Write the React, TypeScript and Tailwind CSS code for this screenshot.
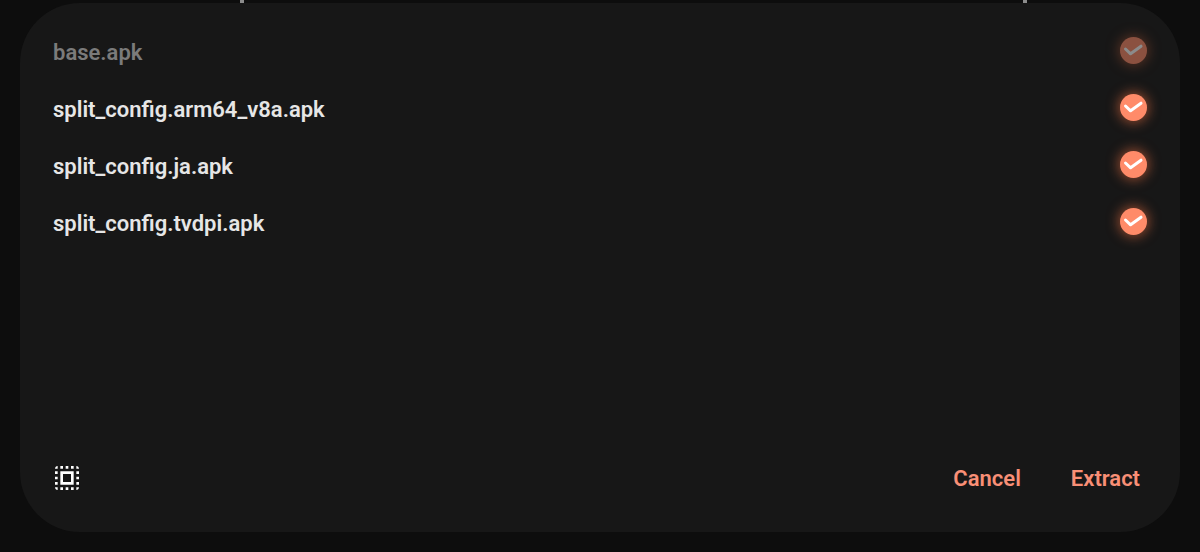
import { useState } from "react";
import { MdSelectAll } from "react-icons/md";

type ApkFile = { name: string; required: boolean };

const files: ApkFile[] = [
  { name: "base.apk", required: true },
  { name: "split_config.arm64_v8a.apk", required: false },
  { name: "split_config.ja.apk", required: false },
  { name: "split_config.tvdpi.apk", required: false },
];

type RowProps = { file: ApkFile; checked: boolean; onToggle: () => void };

function FileRow({ file, checked, onToggle }: RowProps) {
  return (
    <li>
      <label className="flex h-[57px] items-center justify-between">
        <span className={file.required ? "pt-1 text-[#7b7b7b]" : "pt-1 text-[#e6e6e6]"}>{file.name}</span>
        <span className={file.required ? "grid opacity-50" : "grid"}>
          <input
            type="checkbox"
            checked={checked}
            disabled={file.required}
            onChange={onToggle}
            className="col-start-1 row-start-1 size-[27px] appearance-none rounded-full border-2 border-[#666] checked:border-0 checked:bg-[#ff8b69] checked:shadow-[0_0_12px_2px_rgba(255,120,70,0.5)]"
          />
          {checked && (
            <svg
              viewBox="0 0 27 27"
              aria-hidden="true"
              className="pointer-events-none col-start-1 row-start-1 size-[27px]"
            >
              <path
                d="M5.5 12 10.6 16.8 21 9.2"
                fill="none"
                stroke="#fff"
                strokeWidth="3"
                strokeLinecap="round"
                strokeLinejoin="round"
              />
            </svg>
          )}
        </span>
      </label>
    </li>
  );
}

export default function App() {
  const [selected, setSelected] = useState<string[]>(files.map((f) => f.name));

  const toggle = (name: string) =>
    setSelected((s) => (s.includes(name) ? s.filter((n) => n !== name) : [...s, name]));

  return (
    <main className="flex min-h-screen flex-col bg-[#0d0d0d] px-5 pb-5 font-['Roboto',sans-serif] text-[22px] leading-7 font-semibold">
      <div aria-hidden="true" className="flex h-[3px] justify-between pr-[153px] pl-[220px]">
        <span className="w-1 bg-[#8c8c8c]" />
        <span className="w-1 bg-[#8c8c8c]" />
      </div>
      <section className="flex grow flex-col rounded-[60px] bg-[#171717] px-[33px] pt-[19px] pb-[38px]">
        <ul>
          {files.map((file) => (
            <FileRow
              key={file.name}
              file={file}
              checked={selected.includes(file.name)}
              onToggle={() => toggle(file.name)}
            />
          ))}
        </ul>
        <footer className="mt-auto flex items-center justify-between pr-[7px]">
          <button
            type="button"
            aria-label="Select all"
            onClick={() => setSelected(files.map((f) => f.name))}
            className="-ml-0.5 text-white"
          >
            <MdSelectAll className="size-8" />
          </button>
          <div className="flex gap-[50px] pt-0.5 text-[#f98f76]">
            <button type="button">Cancel</button>
            <button type="button">Extract</button>
          </div>
        </footer>
      </section>
    </main>
  );
}
